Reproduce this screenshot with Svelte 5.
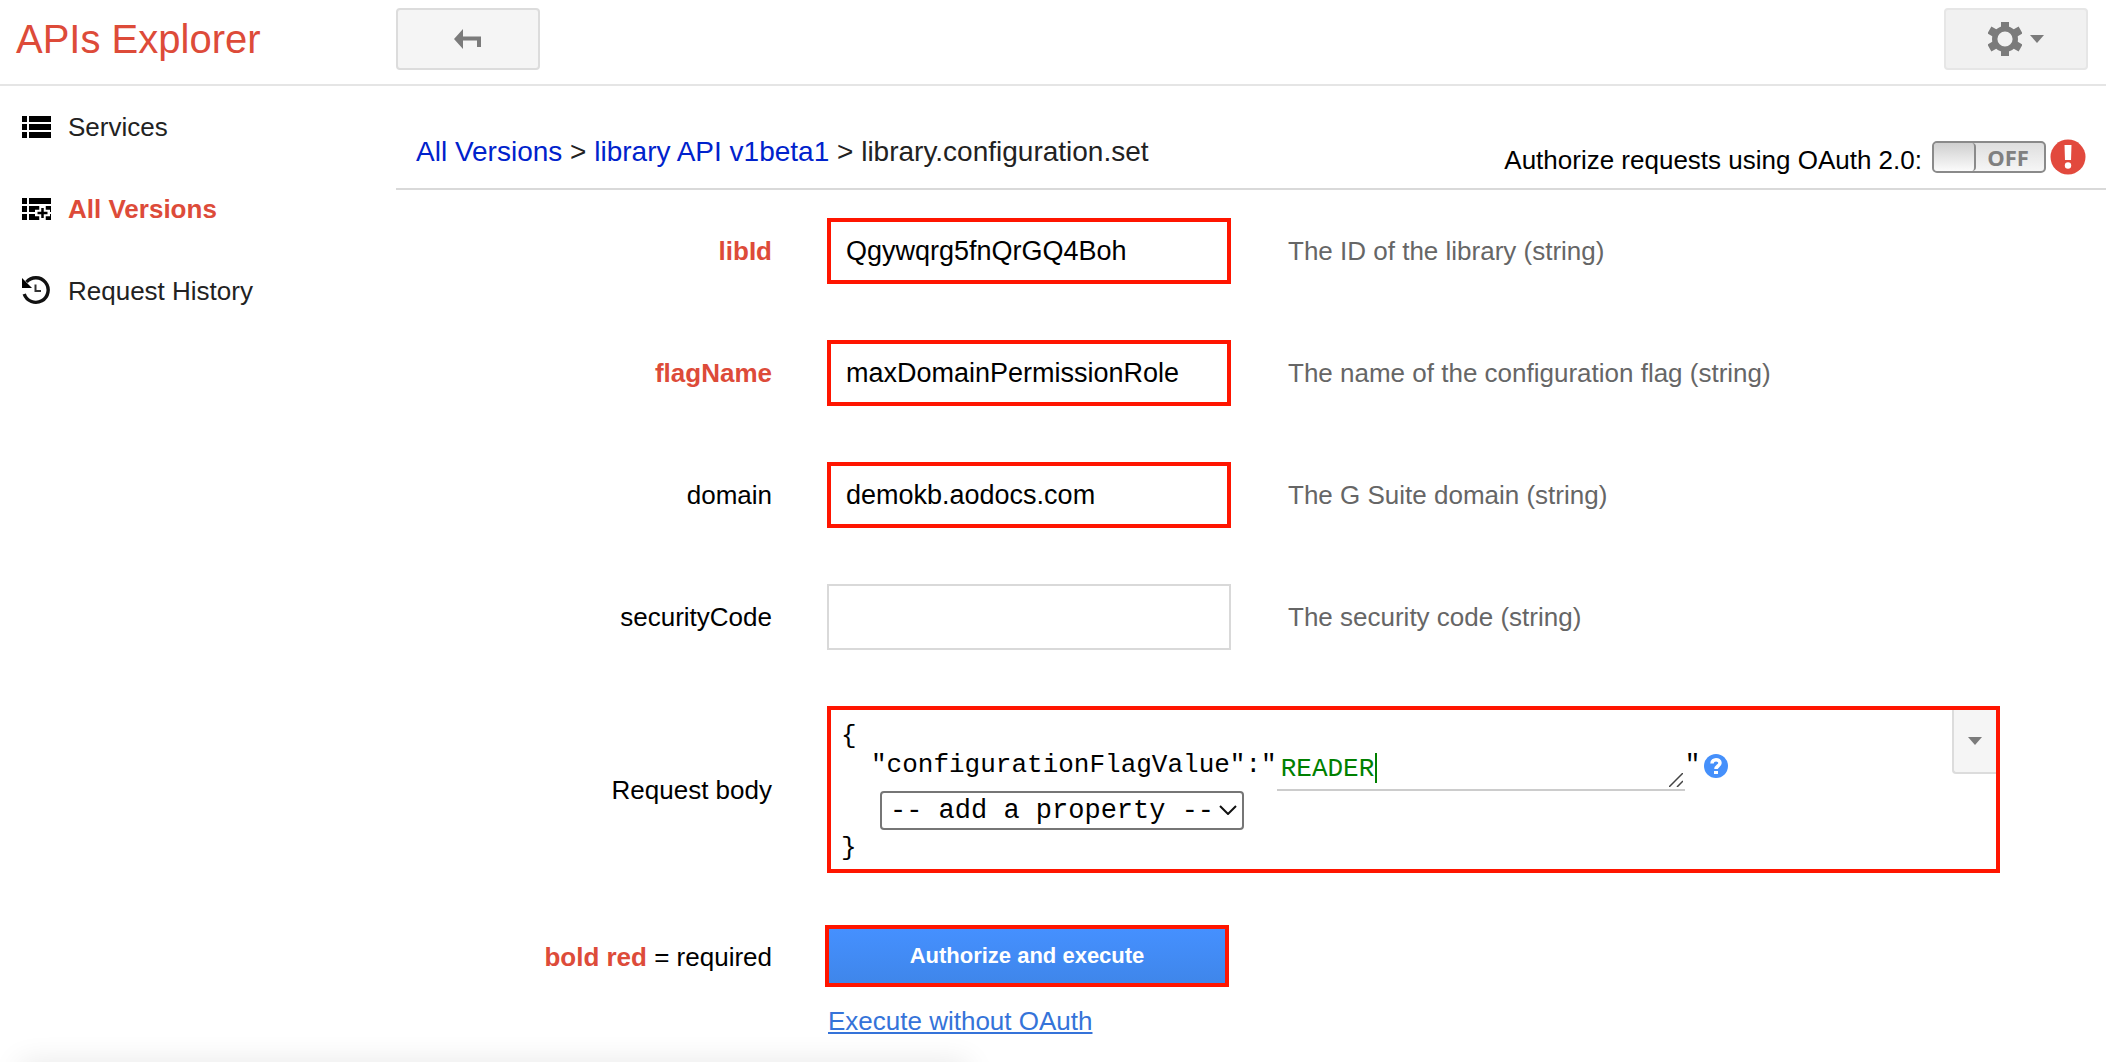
<script>
  const fields = [
    { name: 'libId', value: 'Qgywqrg5fnQrGQ4Boh', hint: 'The ID of the library (string)', required: true, marked: true },
    { name: 'flagName', value: 'maxDomainPermissionRole', hint: 'The name of the configuration flag (string)', required: true, marked: true },
    { name: 'domain', value: 'demokb.aodocs.com', hint: 'The G Suite domain (string)', required: false, marked: true },
    { name: 'securityCode', value: '', hint: 'The security code (string)', required: false, marked: false }
  ];
  let flagValue = $state('READER');
</script>

<div class="page">
  <header>
    <h1>APIs Explorer</h1>
    <button class="tool back" type="button" aria-label="Back">
      <svg width="30" height="22" viewBox="0 0 30 22"><path d="M1 11 10 1v7.500h18V19h-4v-6.500H10V21z" fill="#7b7b7b" /></svg>
    </button>
    <button class="tool settings" type="button" aria-label="Settings">
      <svg width="34" height="34" viewBox="-17 -17 34 34" fill="none" stroke="#7b7b7b">
        <circle r="10.300" stroke-width="5.400" />
        <path d="M0-17V-10M0 10V17M15.600-9l-7 4M-8.600 5l-7 4M-15.600-9l7 4M8.600 5l7 4" stroke-width="8" />
      </svg>
      <svg width="14" height="8" viewBox="0 0 14 8"><path d="M0 0h14L7 8z" fill="#7b7b7b" /></svg>
    </button>
  </header>

  <div class="body">
    <nav>
      <a href="#services">
        <svg width="30" height="32" viewBox="0 0 30 32"><path d="M0 5h5v6H0zm7 0h22v6H7zM0 13h5v6H0zm7 0h22v6H7zM0 21h5v6H0zm7 0h22v6H7z" /></svg>
        Services
      </a>
      <a href="#versions" class="active">
        <svg width="30" height="32" viewBox="0 0 30 32">
          <path d="M0 5h5v6H0zm7 0h22v6H7zM0 13h5v6H0zm7 0h22v6H7zM0 21h5v6H0zm7 0h22v6H7z" />
          <path d="M20.500 12.500v15M13 20h15" stroke="#fff" stroke-width="6.500" fill="none" />
          <path d="M20.500 15v10M15.500 20h10" stroke="#000" stroke-width="2.500" fill="none" />
        </svg>
        All Versions
      </a>
      <a href="#history">
        <svg width="30" height="32" viewBox="0 0 30 32">
          <path d="M4.500 7A12.300 12.300 0 1 1 2.200 19" fill="none" stroke="#111" stroke-width="3.400" />
          <path d="M0 3v10h10z" fill="#000" />
          <path d="M13.500 9.500V16H19" fill="none" stroke="#333" stroke-width="2" />
        </svg>
        Request History
      </a>
    </nav>

    <main>
      <div class="crumbbar">
        <div class="crumbs"><a href="#versions">All Versions</a> &gt; <a href="#library">library API v1beta1</a> &gt; library.configuration.set</div>
        <div class="oauth">
          <span>Authorize requests using OAuth 2.0:</span>
          <button class="switch" type="button" role="switch" aria-checked="false" aria-label="OAuth 2.0 OFF"><span class="knob"></span><span class="off">OFF</span></button>
          <svg width="36" height="36" viewBox="0 0 36 36" role="img" aria-label="Authorization required">
            <circle cx="18" cy="18" r="17.500" fill="#e2493d" />
            <path d="M14.500 6h7l-.5 15h-6z" fill="#fff" /><circle cx="18" cy="26.500" r="3.200" fill="#fff" />
          </svg>
        </div>
      </div>

      <form>
        {#each fields as f}
          <label for={f.name} class:required={f.required}>{f.name}</label>
          <input id={f.name} type="text" value={f.value} class:marked={f.marked} />
          <span class="hint">{f.hint}</span>
        {/each}

        <span class="label">Request body</span>
        <div class="editor">
          <div class="code">
            <div>&#123;</div>
            <div class="prop">
              <label for="flagValue">"configurationFlagValue":"</label>
              <span class="value">
                <textarea id="flagValue" rows="1" spellcheck="false" bind:value={flagValue}></textarea>
                <span class="caret"></span>
                <svg class="grip" width="14" height="14" viewBox="0 0 14 14"><path d="M0 14 14 0M8 14l6-6" stroke="#444" stroke-width="1.500" /></svg>
              </span>
              <span>"</span>
              <svg class="help" width="24" height="24" viewBox="0 0 24 24" role="img" aria-label="Help">
                <circle cx="12" cy="12" r="12" fill="#4590fb" />
                <path d="M8 9.500C8 4.500 16 4.500 16 9c0 3-4 3-4 6" fill="none" stroke="#fff" stroke-width="3.500" /><path d="M10 17h4v3h-4z" fill="#fff" />
              </svg>
            </div>
            <div class="pick">
              <select aria-label="Add a property"><option>-- add a property --</option></select>
              <svg class="chevron" width="18" height="10" viewBox="0 0 18 10"><path d="m1 1 8 8 8-8" fill="none" stroke="#111" stroke-width="2" /></svg>
            </div>
            <div>&#125;</div>
          </div>
          <button class="mode" type="button" aria-label="Editor mode"><svg width="14" height="8" viewBox="0 0 14 8"><path d="M0 0h14L7 8z" fill="#7b7b7b" /></svg></button>
        </div>

        <span class="label legend"><b>bold red</b> = required</span>
        <div class="actions">
          <button class="run" type="submit">Authorize and execute</button>
          <a href="#execute">Execute without OAuth</a>
        </div>
      </form>
    </main>
  </div>
  <div class="status"></div>
</div>

<style>
  :global(body) { background: #fff; }
  .page {
    position: relative;
    min-height: 100vh;
    box-sizing: border-box;
    overflow: hidden;
    font: 26px/32px Arial, "Liberation Sans", sans-serif;
    color: #000;
  }
  header {
    display: flex;
    align-items: center;
    padding: 8px 18px 14px 16px;
    border-bottom: 2px solid #e5e5e5;
  }
  h1 { margin: 0; width: 380px; font-size: 40px; line-height: 48px; font-weight: 400; color: #dd4b39; }
  .tool {
    display: flex;
    align-items: center;
    justify-content: center;
    width: 144px;
    height: 62px;
    padding: 0;
    border: 2px solid #dcdcdc;
    border-radius: 4px;
    background: #f5f5f5;
  }
  .settings { margin-left: auto; gap: 8px; border-color: #e6e6e6; background: #f1f1f1; }

  .body { display: flex; }
  nav { display: flex; flex-direction: column; gap: 50px; width: 396px; padding: 25px 0 0 22px; box-sizing: border-box; }
  nav a { display: flex; align-items: center; gap: 16px; color: #222; text-decoration: none; }
  nav a.active { color: #dd4b39; font-weight: 700; }

  main { flex: 1; min-width: 0; }
  .crumbbar {
    display: flex;
    justify-content: space-between;
    align-items: flex-end;
    height: 102px;
    padding: 0 20px;
    border-bottom: 2px solid #d9d9d9;
  }
  .crumbs { padding-bottom: 20px; font-size: 28px; color: #222; }
  .crumbs a { color: #0022cc; text-decoration: none; }
  .oauth { display: flex; align-items: center; gap: 4px; padding-bottom: 12px; }
  .oauth > span { margin-right: 6px; padding-top: 6px; }
  .switch {
    display: flex;
    width: 114px;
    height: 32px;
    padding: 0;
    border: 2px solid #8a8a8a;
    border-radius: 5px;
    background: linear-gradient(#dedede, #f6f6f6);
    box-sizing: border-box;
    overflow: hidden;
  }
  .knob { width: 40px; height: 28px; border-right: 2px solid #8a8a8a; border-radius: 4px; background: linear-gradient(#cfcfcf, #fbfbfb); }
  .off { flex: 1; padding-right: 4px; font: 700 22px/28px "Open Sans", sans-serif; color: #808080; }

  form {
    display: grid;
    grid-template-columns: 376px 404px 1fr;
    column-gap: 55px;
    padding: 28px 106px 0 0;
    align-items: center;
  }
  form > label, form > .label { text-align: right; }
  .required, b { color: #dd4b39; font-weight: 700; }
  input {
    width: 100%;
    height: 66px;
    margin-bottom: 56px;
    padding: 0 17px;
    border: 2px solid #d9d9d9;
    box-sizing: border-box;
    font: inherit;
    font-size: 27px;
    color: #000;
    outline: none;
  }
  input.marked { border: 4px solid #ff1500; padding: 0 15px; }
  form > label, .hint { margin-bottom: 56px; }
  .hint { padding-left: 2px; color: #666; }

  .editor {
    grid-column: 2 / 4;
    display: flex;
    justify-content: space-between;
    align-items: flex-start;
    border: 4px solid #ff1500;
  }
  .code { padding: 12px 0 7px 10px; font: 26px/28px "Courier New", "Liberation Mono", monospace; }
  .prop { display: flex; padding: 1px 0 0 30px; height: 40px; }
  .value { position: relative; width: 408px; height: 40px; }
  textarea {
    display: block;
    width: 100%;
    height: 40px;
    padding: 4px 4px 0;
    border: 0;
    border-bottom: 2px solid #ccc;
    box-sizing: border-box;
    font: inherit;
    color: #008000;
    caret-color: #008000;
    resize: none;
    outline: none;
    overflow: hidden;
    background: transparent;
  }
  .caret { position: absolute; left: 98px; top: 2px; width: 2px; height: 30px; background: #008000; }
  .grip { position: absolute; right: 2px; bottom: 4px; }
  .help { margin: 3px 0 0 4px; }
  .pick { position: relative; width: 364px; margin: 0 0 4px 39px; }
  select {
    display: block;
    appearance: none;
    width: 100%;
    height: 39px;
    padding: 0 8px;
    border: 2px solid #767676;
    border-radius: 4px;
    background: #fff;
    font: inherit;
    font-size: 27px;
    color: #000;
  }
  .chevron { position: absolute; right: 7px; top: 14px; }
  .mode {
    width: 44px;
    height: 64px;
    padding: 0;
    border: 2px solid #dcdcdc;
    border-width: 0 0 2px 2px;
    border-radius: 0 0 0 4px;
    background: #f5f5f5;
  }
  .mode svg { display: block; margin: 0 auto; }

  .legend { align-self: start; padding-top: 68px; }
  .actions { display: flex; flex-direction: column; align-items: flex-start; margin: 52px 0 0 -2px; }
  .run {
    width: 404px;
    height: 62px;
    border: 4px solid #ff1500;
    background: linear-gradient(#4590ff, #3f86ea);
    font: 700 22px/28px Arial, "Liberation Sans", sans-serif;
    color: #fff;
  }
  .actions a { margin: 18px 0 0 3px; color: #3573d9; }
  .status {
    position: absolute;
    left: 20px;
    bottom: -22px;
    width: 45%;
    height: 20px;
    box-shadow: 0 0 30px rgba(0, 0, 0, 0.12);
  }
</style>
